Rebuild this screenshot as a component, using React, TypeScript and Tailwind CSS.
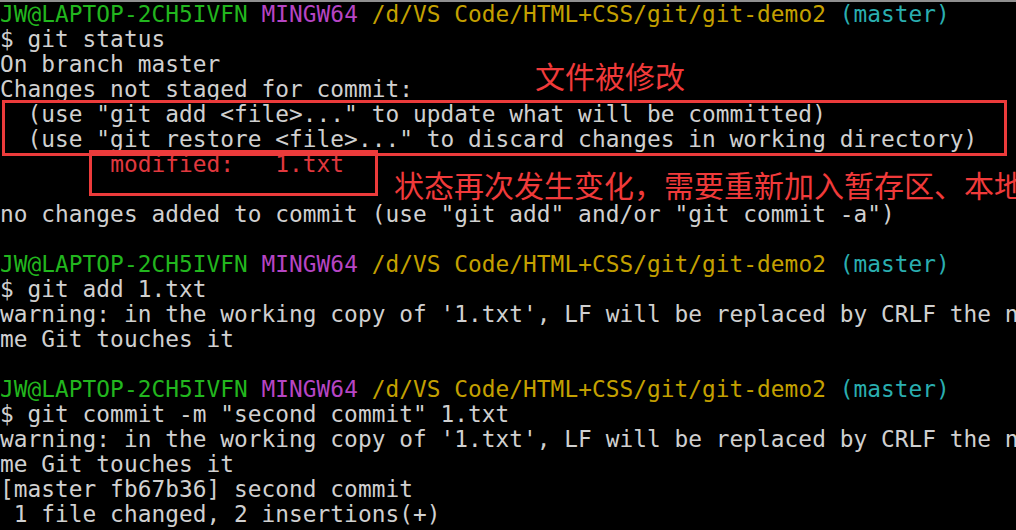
import React from "react";

const G = "text-[#22b61e]";
const M = "text-[#b645c4]";
const Y = "text-[#c4a000]";
const C = "text-[#2aaeb0]";

function Prompt() {
  return (
    <div className="h-[25px]">
      <span className={G}>JW@LAPTOP-2CH5IVFN</span> <span className={M}>MINGW64</span>{" "}
      <span className={Y}>/d/VS Code/HTML+CSS/git/git-demo2</span>{" "}
      <span className={C}>(master)</span>
    </div>
  );
}

function L({ children }: { children?: React.ReactNode }) {
  return <div className="h-[25px]">{children ?? " "}</div>;
}

export default function App() {
  return (
    <div className="relative w-[1016px] h-[530px] overflow-hidden bg-black border-t-2 border-[#8f8f8f]">
      <div
        className="whitespace-pre text-[22.8px] leading-[25px] tracking-[0.04px] text-[#d0d0d0]"
        style={{ fontFamily: '"DejaVu Sans Mono", "Liberation Mono", monospace' }}
      >
        <Prompt />
        <L>$ git status</L>
        <L>On branch master</L>
        <L>Changes not staged for commit:</L>
        <L>{'  (use "git add <file>..." to update what will be committed)'}</L>
        <L>{'  (use "git restore <file>..." to discard changes in working directory)'}</L>
        <L>
          {"        "}
          <span className="text-[#e0383e]">modified:   1.txt</span>
        </L>
        <L />
        <L>{'no changes added to commit (use "git add" and/or "git commit -a")'}</L>
        <L />
        <Prompt />
        <L>$ git add 1.txt</L>
        <L>{"warning: in the working copy of '1.txt', LF will be replaced by CRLF the n"}</L>
        <L>me Git touches it</L>
        <L />
        <Prompt />
        <L>{'$ git commit -m "second commit" 1.txt'}</L>
        <L>{"warning: in the working copy of '1.txt', LF will be replaced by CRLF the n"}</L>
        <L>me Git touches it</L>
        <L>[master fb67b36] second commit</L>
        <L> 1 file changed, 2 insertions(+)</L>
      </div>

      {/* annotation boxes */}
      <div className="absolute left-[2px] top-[98px] w-[1005px] h-[56px] border-[3px] border-[#ec3b3b]" />
      <div className="absolute left-[89px] top-[148px] w-[289px] h-[46px] border-[3px] border-[#ec3b3b]" />

      {/* annotation texts */}
      <div
        className="absolute left-[535px] top-[55px] text-[30px] leading-[36px] text-[#f03a3a] whitespace-nowrap"
        style={{ fontFamily: '"Noto Sans CJK SC", sans-serif' }}
      >
        文件被修改
      </div>
      <div
        className="absolute left-[394px] top-[164px] text-[30px] leading-[36px] text-[#f03a3a] whitespace-nowrap"
        style={{ fontFamily: '"Noto Sans CJK SC", sans-serif' }}
      >
        状态再次发生变化，需要重新加入暂存区、本地
      </div>
    </div>
  );
}
